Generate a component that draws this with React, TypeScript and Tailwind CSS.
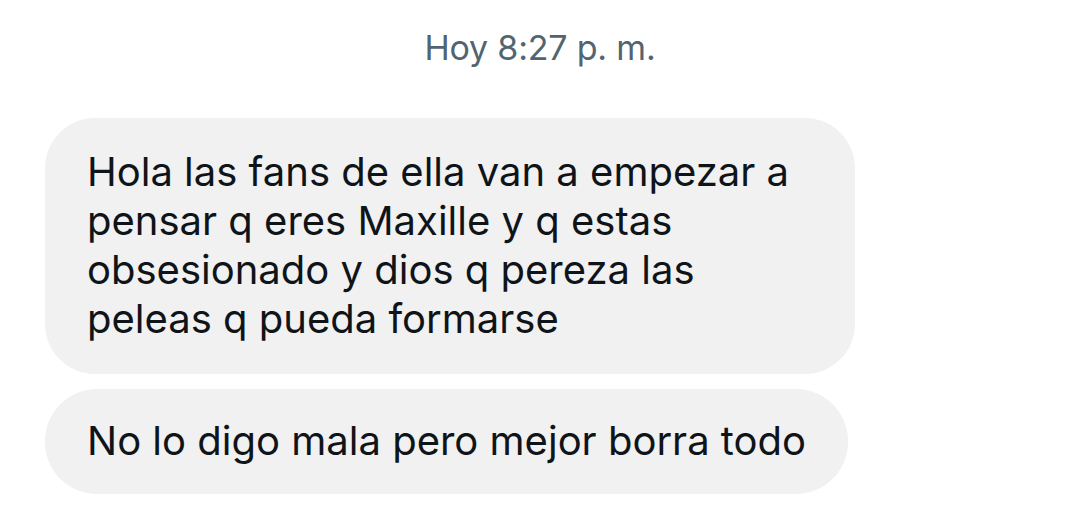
export default function App() {
  const font = { fontFamily: '"Inter", "Roboto", "Liberation Sans", sans-serif' };
  return (
    <div className="w-[1080px] h-[517px] bg-white overflow-hidden" style={font}>
      <div className="flex flex-col pt-[27px]">
        <div className="text-center text-[34px] leading-[42px] text-[#536471] tracking-[-0.2px]">Hoy 8:27 p. m.</div>
        <div className="flex flex-col gap-[15px] pl-[45px] mt-[49px]">
          <div className="w-[810px] h-[256px] rounded-[50px] bg-[#f1f1f1] pl-[42px] pt-[29px] text-[40px] leading-[49px] text-[#0f1419]">
            <div>Hola las fans de ella van a empezar a</div>
            <div>pensar q eres Maxille y q estas</div>
            <div>obsesionado y dios q pereza las</div>
            <div>peleas q pueda formarse</div>
          </div>
          <div className="w-[803px] h-[105px] rounded-[52px] bg-[#f1f1f1] pl-[42px] pt-[27px] text-[40px] leading-[49px] text-[#0f1419]">
            <div>No lo digo mala pero mejor borra todo</div>
          </div>
        </div>
      </div>
    </div>
  );
}
